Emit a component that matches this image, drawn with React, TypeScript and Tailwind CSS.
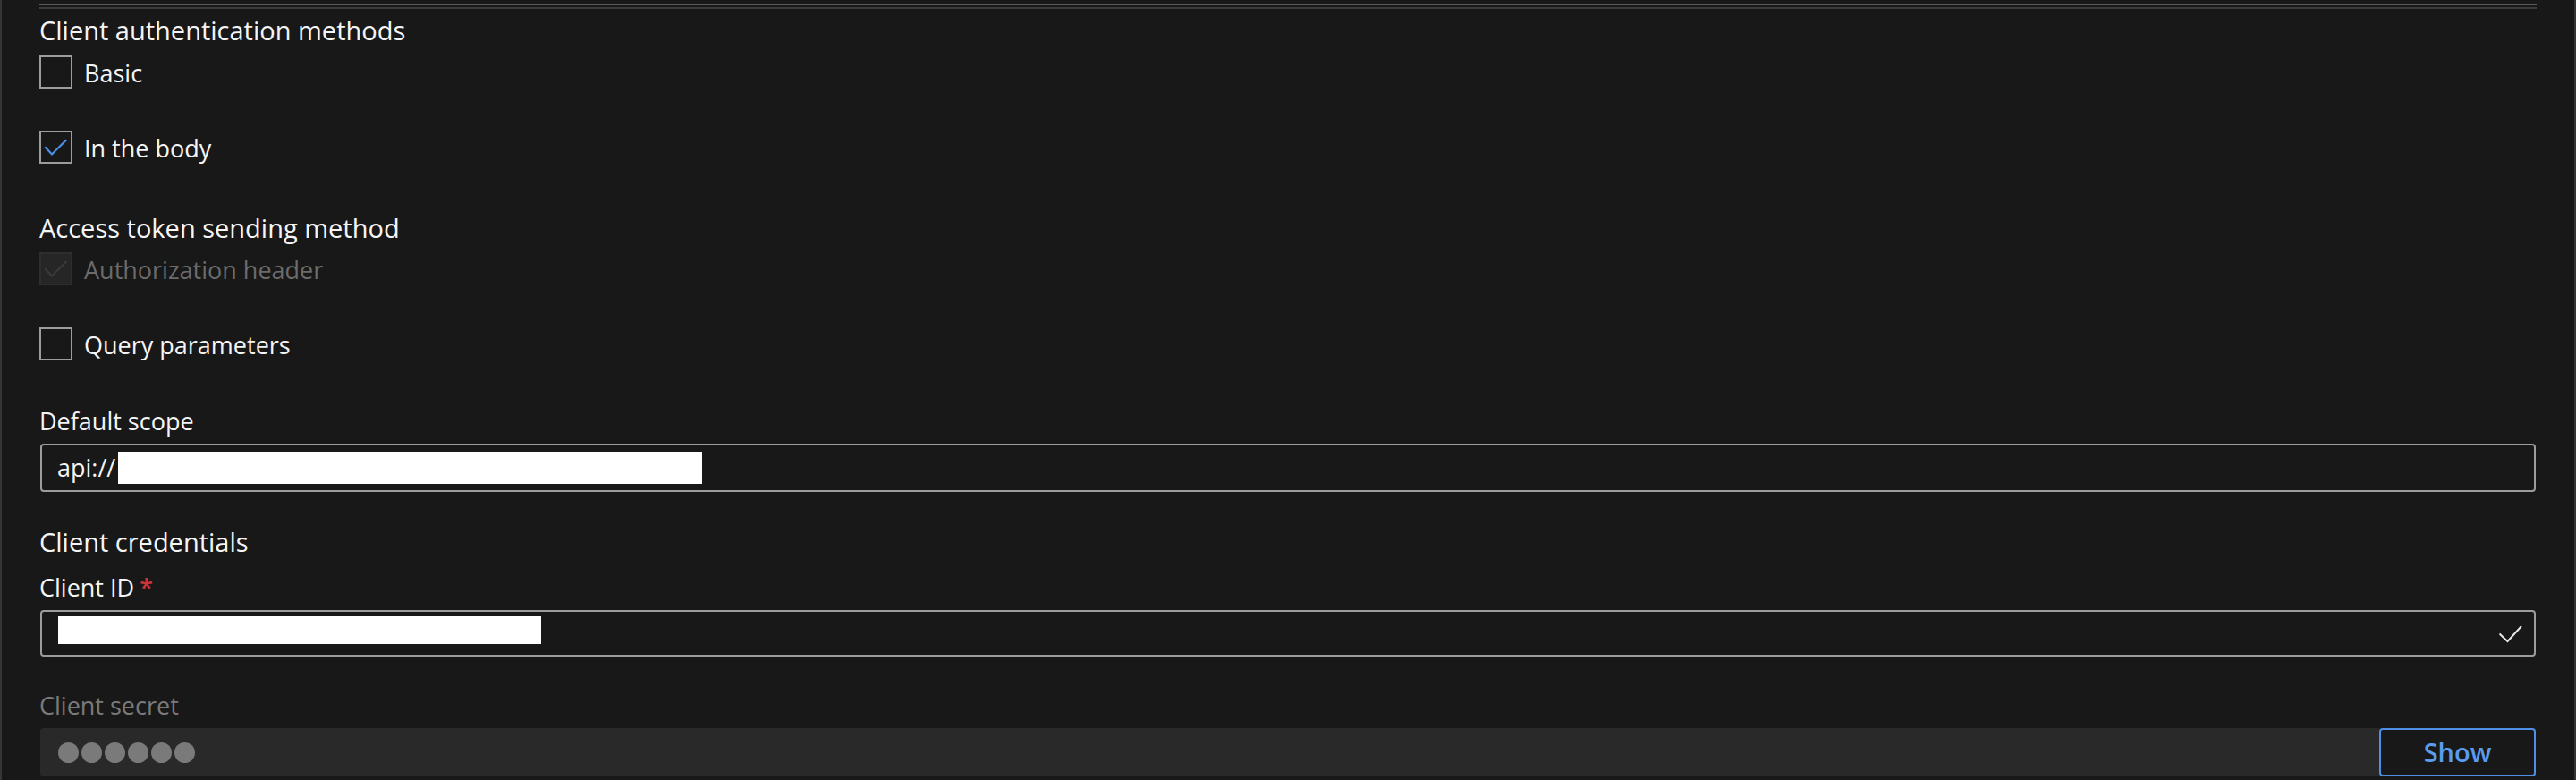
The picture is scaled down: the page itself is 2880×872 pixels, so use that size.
import React from "react";

const font = { fontFamily: '"Open Sans", "Noto Sans", sans-serif' };

const Checkbox = ({ checked = false, disabled = false }: { checked?: boolean; disabled?: boolean }) => (
  <div
    className={
      disabled
        ? "w-[37px] h-[37px] shrink-0 border-2 border-[#2e2e2e] bg-[#262626] flex items-center justify-center"
        : "w-[37px] h-[37px] shrink-0 border-2 border-[#9c9c9c] flex items-center justify-center"
    }
  >
    {checked && (
      <svg width="27" height="20" viewBox="0 0 27 20" fill="none">
        <path
          d="M2 10 L9 17.5 L24.5 2"
          stroke={disabled ? "#3a3a3a" : "#4a8fe8"}
          strokeWidth="2.2"
          strokeLinecap="square"
        />
      </svg>
    )}
  </div>
);

const CheckRow = ({
  label,
  checked,
  disabled,
  className,
}: {
  label: string;
  checked?: boolean;
  disabled?: boolean;
  className: string;
}) => (
  <div className={`flex items-center gap-[13px] h-[37px] ${className}`}>
    <Checkbox checked={checked} disabled={disabled} />
    <span className={disabled ? "pt-[2px] text-[#6b6b6b]" : "pt-[2px] text-[#f5f5f5]"}>{label}</span>
  </div>
);

export default function App() {
  return (
    <div
      className="min-h-screen w-full bg-[#181818] border-x-2 border-[#363636] px-[42px] text-[27px] leading-[38px] text-[#f5f5f5]"
      style={font}
    >
      {/* double rule */}
      <div className="pt-[4px]">
        <div className="h-[2px] bg-[#5a5a5a]" />
        <div className="h-[2px] mt-[2px] bg-[#3c3c3c]" />
      </div>

      <div className="mt-[5px] text-[29px]">Client authentication methods</div>
      <CheckRow label="Basic" className="mt-[9px]" />
      <CheckRow label="In the body" checked className="mt-[47px]" />

      <div className="mt-[53px] text-[29px]">Access token sending method</div>
      <CheckRow label="Authorization header" checked disabled className="mt-[8px]" />
      <CheckRow label="Query parameters" className="mt-[47px]" />

      <div className="mt-[49px]">Default scope</div>
      <div className="mt-[6px] mx-px h-[54px] border-2 border-[#9c9c9c] rounded-[4px] flex items-center pl-[17px]">
        <span>api://</span>
        <div className="ml-[3px] w-[653px] h-[36px] bg-white" />
      </div>

      <div className="mt-[37px] text-[29px]">Client credentials</div>
      <div className="mt-[13px] flex">
        <span>Client ID</span>
        <span className="ml-[6px] text-[#d13438] font-semibold">*</span>
      </div>
      <div className="mt-[6px] mx-px h-[52px] border-2 border-[#9c9c9c] rounded-[4px] flex items-start justify-between pl-[18px] pr-[12px]">
        <div className="mt-[5px] w-[540px] h-[31px] bg-white" />
        <svg className="mt-[14px]" width="28" height="22" viewBox="0 0 28 22" fill="none">
          <path d="M1.5 10.5 L10.5 19 L26 2" stroke="#e6e6e6" strokeWidth="2" />
        </svg>
      </div>

      <div className="mt-[36px] text-[#7a7a7a]">Client secret</div>
      <div className="mt-[6px] mx-px h-[54px] flex">
        <div className="flex-1 bg-[#292929] rounded-l-[4px] flex items-center pl-[20px] gap-[3px]">
          {[0, 1, 2, 3, 4, 5].map((i) => (
            <div key={i} className="w-[23px] h-[23px] rounded-full bg-[#7a7a7a]" />
          ))}
        </div>
        <button className="w-[175px] h-full border-2 border-[#4f8fe6] rounded-[4px] bg-[#181818] text-[#5a9cee] font-semibold text-[29px]">
          Show
        </button>
      </div>
    </div>
  );
}
